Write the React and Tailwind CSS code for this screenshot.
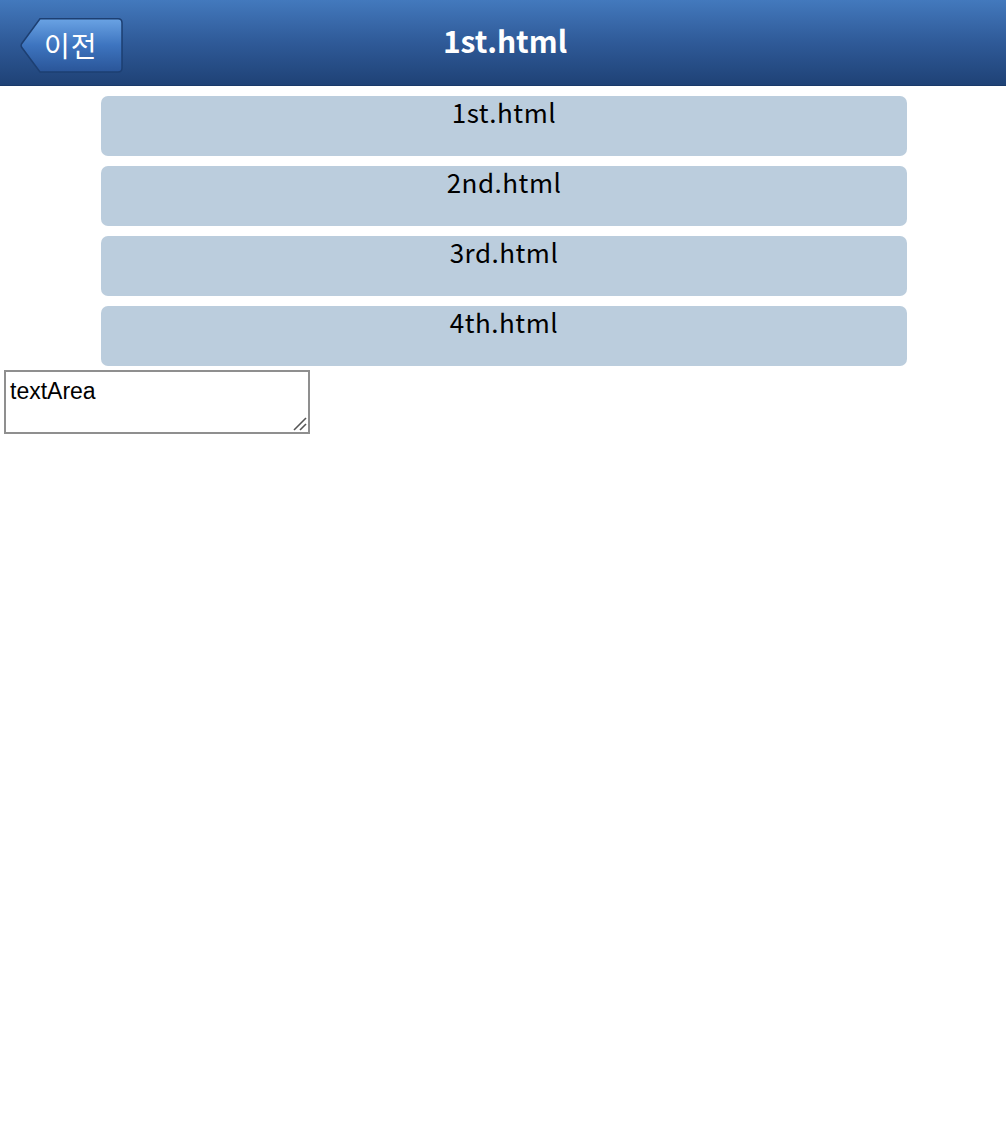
export default function App() {
  const items = ["1st.html", "2nd.html", "3rd.html", "4th.html"];
  return (
    <div className="w-[1006px] h-[1134px] bg-white relative" style={{ fontFamily: '"Noto Sans CJK KR", "Noto Sans", sans-serif' }}>
      <div className="relative h-[86px] bg-gradient-to-b from-[#4379bd] via-[#2f5a98] to-[#1f4276] border-b border-[#1a3a6a]">
        <div className="absolute left-[20px] top-[18px] w-[103px] h-[55px]">
          <svg width="103" height="55" viewBox="0 0 103 55" className="absolute left-0 top-0">
            <defs>
              <linearGradient id="bb" x1="0" y1="0" x2="0" y2="1">
                <stop offset="0" stopColor="#6aa3e4" />
                <stop offset="0.5" stopColor="#3d74bf" />
                <stop offset="1" stopColor="#2a5598" />
              </linearGradient>
            </defs>
            <path d="M20 0.8 H98 Q102 0.8 102 5 V50 Q102 54 98 54 H20 L1.5 29 Q0.8 27.5 1.5 26 Z" fill="url(#bb)" stroke="#1d3f72" strokeWidth="1.5" />
          </svg>
          <span className="absolute left-[24px] top-[7px] text-white text-[28px] leading-[40px] tracking-[1px]">이전</span>
        </div>
        <div className="h-full flex items-center justify-center pb-[6px]">
          <span className="text-white font-bold text-[30px] leading-none pl-1">1st.html</span>
        </div>
      </div>
      <div className="flex flex-col items-center gap-[10px] pt-[10px] pl-[2px]">
        {items.map((t) => (
          <div key={t} className="w-[806px] h-[60px] rounded-[7px] bg-[#bbcddd] text-center text-black text-[26px] leading-[32px] tracking-[0.5px]">
            {t}
          </div>
        ))}
      </div>
      <div className="pl-[4px] pt-[4px]">
        <div className="relative w-[306px] h-[64px]">
          <textarea
            defaultValue="textArea"
            className="block w-[306px] h-[64px] border-2 border-[#8f8f8f] px-[4px] pt-[6px] pb-[4px] text-[23px] leading-[26px] text-black outline-none resize-none"
            style={{ fontFamily: '"Liberation Sans", Arial, sans-serif' }}
          />
          <svg width="14" height="14" viewBox="0 0 14 14" className="absolute right-[3px] bottom-[3px] pointer-events-none">
            <line x1="1" y1="13" x2="13" y2="1" stroke="#555" strokeWidth="1.6" />
            <line x1="7" y1="13" x2="13" y2="7" stroke="#555" strokeWidth="1.6" />
          </svg>
        </div>
      </div>
    </div>
  );
}
